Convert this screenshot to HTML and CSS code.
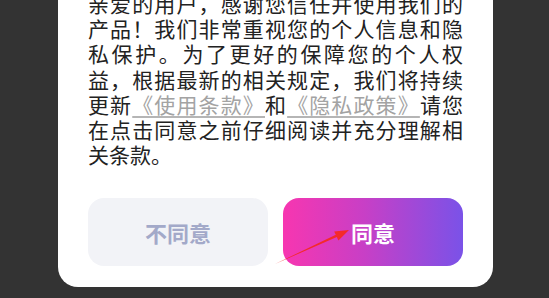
FILE: index.html
```html
<!DOCTYPE html>
<html lang="zh-CN">
<head>
<meta charset="utf-8">
<title>隐私保护</title>
<link rel="stylesheet" href="styles.css">
</head>
<body>
<div class="screen">
  <div class="dialog">
    <p class="notice">亲爱的用户，感谢您信任并使用我们的产品！我们非常重视您的个人信息和隐私保护。为了更好的保障您的个人权益，根据最新的相关规定，我们将持续更新<a class="link" href="#">《使用条款》</a>和<a class="link" href="#">《隐私政策》</a>请您在点击同意之前仔细阅读并充分理解相关条款。</p>
    <div class="actions">
      <button class="btn btn-decline" type="button">不同意</button>
      <button class="btn btn-agree" type="button">同意</button>
    </div>
  </div>
  <svg class="arrow" width="549" height="298" viewBox="0 0 549 298" xmlns="http://www.w3.org/2000/svg">
    <polygon points="275,273 335.8,243.8 334.2,240.4 349,239 338.4,249.4 336.8,246 " fill="#f42a2a"/>
  </svg>
</div>
</body>
</html>
```
FILE: styles.css
```css
html, body {
  margin: 0;
  padding: 0;
}
body {
  background: #333333;
  font-family: "Noto Sans CJK SC", "Noto Sans", sans-serif;
  width: 549px;
  height: 298px;
  overflow: hidden;
}
.screen {
  position: relative;
  width: 549px;
  height: 298px;
}
.dialog {
  margin: -9px 0 0 58px;
  width: 435px;
  box-sizing: border-box;
  padding: 0 30px 21px;
  background: #ffffff;
  border-radius: 0 0 20px 20px;
}
.notice {
  margin: 0;
  font-size: 21px;
  line-height: 1.2;
  color: #222222;
  text-align: justify;
}
.link {
  color: #a3a3a3;
  text-decoration: underline;
  text-decoration-color: #b5b5b5;
  text-underline-offset: 3px;
}
.actions {
  display: flex;
  gap: 15px;
  margin-top: 31px;
}
.btn {
  flex: 1;
  height: 68px;
  border: 0;
  border-radius: 16px;
  font-family: "Noto Sans CJK SC", "Noto Sans", sans-serif;
  font-size: 22px;
  font-weight: 700;
  padding: 0;
}
.btn-decline {
  background: #f2f3f7;
  color: #a3a9c9;
}
.btn-agree {
  background: linear-gradient(90deg, #f736b0 0%, #c83fc6 45%, #7a52e8 100%);
  color: #ffffff;
}
.arrow {
  position: absolute;
  left: 0;
  top: 0;
  pointer-events: none;
}
```
